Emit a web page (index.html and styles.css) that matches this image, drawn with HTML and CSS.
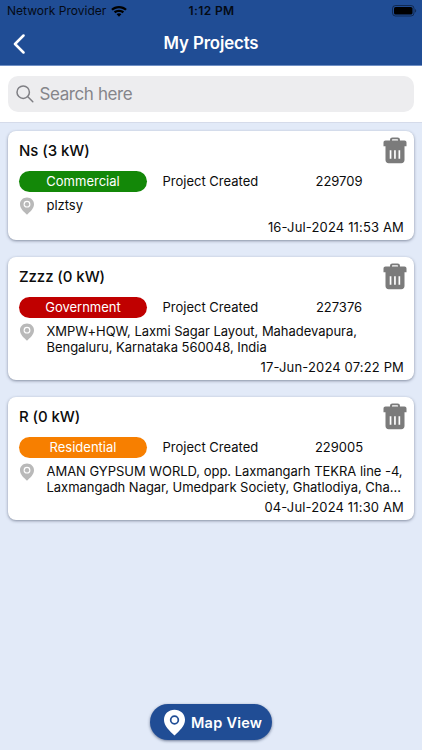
FILE: index.html
```
<!DOCTYPE html>
<html lang="en">
<head>
<meta charset="utf-8">
<title>My Projects</title>
<link rel="stylesheet" href="styles.css">
</head>
<body>
<svg class="defs" width="0" height="0" aria-hidden="true">
  <symbol id="pin" viewBox="0 0 16 19">
    <path fill-rule="evenodd" d="M8 .5C3.800 .5.600 3.500.600 7.600c0 4.600 3.900 7.600 7.400 11.100 3.500-3.500 7.400-6.500 7.400-11.100C15.400 3.500 12.200.5 8 .5zM8 4a3.600 3.600 0 1 1 0 7.200A3.600 3.600 0 0 1 8 4z"/>
    <circle cx="8" cy="7.600" r="2.300"/>
  </symbol>
  <symbol id="pin-ring" viewBox="0 0 16 19">
    <path fill-rule="evenodd" d="M8 .5C3.800 .5.600 3.500.600 7.600c0 4.600 3.900 7.600 7.400 11.100 3.500-3.500 7.400-6.500 7.400-11.100C15.400 3.500 12.200.5 8 .5zM8 4.400a3.300 3.300 0 1 1 0 6.600A3.300 3.300 0 0 1 8 4.400z"/>
    <circle cx="8" cy="7.700" r="2.100"/>
  </symbol>
  <symbol id="trash" viewBox="0 0 24 27">
    <path fill-rule="evenodd" d="M7 3.600V3C7 1.300 8 .5 9.400.5h5.200C16 .5 17 1.300 17 3v.6h4.500c1.200 0 2 .8 2 2v3.600h-2V23c0 2-1.200 3.200-3.200 3.200H5.700c-2 0-3.200-1.200-3.200-3.200V9.200h-2V5.600c0-1.200.8-2 2-2zM9 3.600h6v-.7c0-.4-.2-.6-.6-.6H9.600c-.4 0-.6.2-.6.600zM6.700 13.300v8.500h1.700v-8.500zm4.400 0v8.500h1.700v-8.500zm4.400 0v8.500h1.700v-8.500z"/>
  </symbol>
</svg>
<div class="app">
  <header class="top">
    <div class="status">
      <div class="carrier"><span>Network Provider</span>
        <svg class="wifi" viewBox="0 0 16 11"><path d="M8 0C4.900 0 2.100 1.200.2 3l1.500 1.600C3.300 3.100 5.500 2.200 8 2.200s4.700.9 6.300 2.400L15.800 3C13.900 1.200 11.100 0 8 0zM8 3.700c-2 0-3.800.7-5.100 1.900l1.500 1.600C5.400 6.400 6.600 5.900 8 5.900s2.600.5 3.600 1.300l1.500-1.600C11.800 4.400 10 3.700 8 3.700zM8 7.300c-.9 0-1.800.3-2.400.9L8 10.800l2.400-2.600c-.6-.6-1.500-.9-2.400-.9z"/></svg>
      </div>
      <div class="clock">1:12 PM</div>
      <svg class="battery" viewBox="0 0 25 12"><rect x=".5" y=".5" width="21.500" height="10.500" rx="3" fill="none" stroke="#000" stroke-opacity=".45"/><rect x="2" y="2" width="18.500" height="7.500" rx="1.600"/><path d="M23.200 4v3.600c1.300-.5 1.300-3.100 0-3.600z" fill-opacity=".5"/></svg>
    </div>
    <nav class="nav">
      <svg class="back" viewBox="0 0 12 20"><path d="M10.500 1.500 2 10l8.500 8.500"/></svg>
      <h1>My Projects</h1>
    </nav>
  </header>
  <div class="searchbar">
    <div class="field">
      <svg class="glass" viewBox="0 0 18 18"><circle cx="7.200" cy="7.200" r="6.200"/><path d="m11.800 11.800 5 5"/></svg>
      <span>Search here</span>
    </div>
  </div>
  <main class="list">
    <article class="card">
      <div class="head"><h2>Ns (3 kW)</h2><svg class="trash"><use href="#trash"/></svg></div>
      <div class="meta"><span class="tag commercial">Commercial</span><span class="state">Project Created</span><span class="number">229709</span></div>
      <div class="place"><svg class="pin"><use href="#pin"/></svg><p>plztsy</p></div>
      <time>16-Jul-2024 11:53 AM</time>
    </article>
    <article class="card">
      <div class="head"><h2>Zzzz (0 kW)</h2><svg class="trash"><use href="#trash"/></svg></div>
      <div class="meta"><span class="tag government">Government</span><span class="state">Project Created</span><span class="number">227376</span></div>
      <div class="place two-line"><svg class="pin"><use href="#pin"/></svg><p>XMPW+HQW, Laxmi Sagar Layout, Mahadevapura,<br>Bengaluru, Karnataka 560048, India</p></div>
      <time>17-Jun-2024 07:22 PM</time>
    </article>
    <article class="card">
      <div class="head"><h2>R (0 kW)</h2><svg class="trash"><use href="#trash"/></svg></div>
      <div class="meta"><span class="tag residential">Residential</span><span class="state">Project Created</span><span class="number">229005</span></div>
      <div class="place two-line"><svg class="pin"><use href="#pin"/></svg><p>AMAN GYPSUM WORLD, opp. Laxmangarh TEKRA line -4,<br>Laxmangadh Nagar, Umedpark Society, Ghatlodiya, Cha...</p></div>
      <time>04-Jul-2024 11:30 AM</time>
    </article>
  </main>
  <footer class="bottom">
    <button class="map"><svg class="mappin"><use href="#pin-ring"/></svg><span>Map View</span></button>
  </footer>
</div>
</body>
</html>
```
FILE: styles.css
```
* { box-sizing: border-box; margin: 0; padding: 0; }
body { font-family: Inter, "Liberation Sans", sans-serif; color: #0c0c0c; background: #e2eaf8; }
.defs { position: absolute; }
svg { display: block; flex: none; }
.app { width: 422px; height: 750px; display: flex; flex-direction: column; overflow: hidden; }
.top { height: 66px; background: #204d95; border-bottom: 1px solid #6f8fc4; }
.status { height: 22px; display: grid; grid-template-columns: 1fr auto 1fr; align-items: center; padding: 0 5px 0 7px; font-size: 12px; line-height: 22px; color: #040a14; }
.carrier { display: flex; align-items: center; gap: 5px; letter-spacing: .02px; white-space: nowrap; }
.wifi { width: 16px; height: 11px; }
.clock { font-weight: 600; letter-spacing: .4px; margin-left: -1px; }
.battery { width: 25px; height: 12px; justify-self: end; }
.nav { height: 43px; display: grid; grid-template-columns: 30px 1fr 30px; align-items: center; padding: 0 13px; }
.back { width: 12px; height: 20px; fill: none; stroke: #fff; stroke-width: 2.5; stroke-linecap: round; stroke-linejoin: round; }
h1 { font-size: 16.800px; letter-spacing: -.12px; font-weight: 600; color: #fff; text-align: center; line-height: 43px; }
.searchbar { height: 57px; padding: 10px 8px; background: #fff; border-bottom: 1px solid #d5dbea; }
.field { height: 36px; border-radius: 10px; background: #ededef; display: flex; align-items: center; gap: 5.500px; padding: 0 8px; color: #85858a; font-size: 17px; letter-spacing: -.4px; }
.glass { width: 18px; height: 18px; fill: none; stroke: #7f7f84; stroke-width: 1.5; stroke-linecap: round; }
.list { flex: 1; padding: 8px 8px 0; display: flex; flex-direction: column; gap: 16px; }
.card { background: #fff; border-radius: 8px; padding: 6px 10px 5px 11px; box-shadow: 0 1px 3px rgba(40,50,75,.5); }
.card:not(:last-child) { margin-bottom: .5px; }
.head { height: 34px; display: flex; justify-content: space-between; }
h2 { font-size: 15px; line-height: 27px; font-weight: 500; letter-spacing: -.08px; }
.trash { width: 24px; height: 27px; fill: #7b7b7b; margin-right: -3px; }
.meta { display: grid; grid-template-columns: 128px 128px 1fr; height: 21px; line-height: 21.500px; font-size: 13px; }
.tag { height: 21px; border-radius: 11px; color: #fff; text-align: center; }
.commercial { background: #138808; }
.government { background: #c00000; }
.residential { background: #f77f00; }
.state { padding-left: 15.500px; white-space: nowrap; }
.number { text-align: center; padding-right: 1px; }
.place { display: flex; gap: 11.500px; height: 24px; padding-top: 5px; }
.place.two-line { height: 38.500px; }
.pin { width: 16px; height: 18px; fill: #b9b9b9; }
.place p { font-size: 13px; line-height: 16px; letter-spacing: -.03px; white-space: nowrap; }
time { display: block; text-align: right; font-size: 13px; line-height: 16px; margin-top: 3px; letter-spacing: .15px; }
.bottom { height: 46px; display: flex; justify-content: center; }
.map { width: 122px; height: 36px; border: 0; border-radius: 18px; background: #204d95; box-shadow: 0 1px 3px rgba(30,45,80,.6); display: flex; align-items: center; gap: 5px; padding-left: 13px; color: #fff; font: 600 14.500px Inter, sans-serif; letter-spacing: .25px; white-space: nowrap; }
.mappin { width: 23px; height: 27px; fill: #fff; }
```
